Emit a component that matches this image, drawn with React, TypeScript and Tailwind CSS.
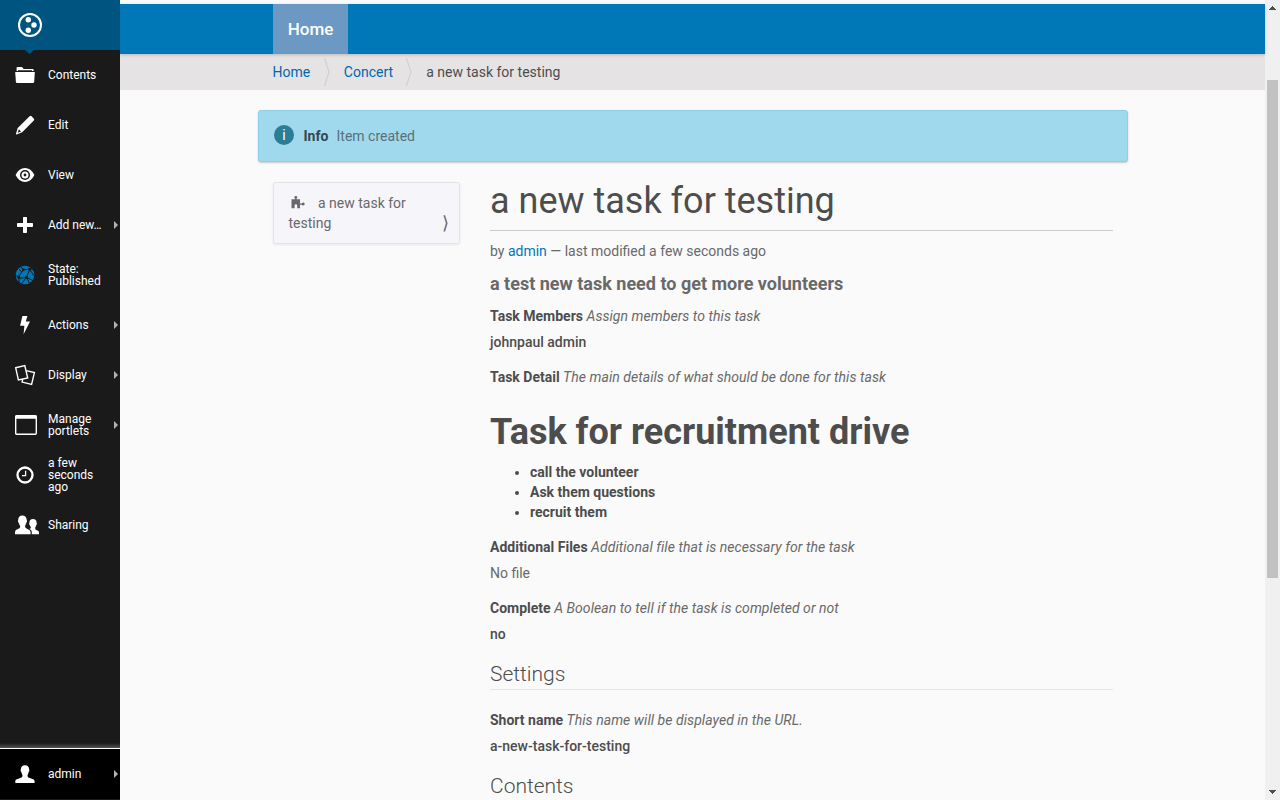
import React from 'react';

const icon = 'block overflow-visible';

function Logo() {
  return (
    <svg className={icon} width="24" height="24" viewBox="0 0 24 24" fill="#fff">
      <circle cx="12" cy="12" r="11" fill="none" stroke="#fff" strokeWidth="2" />
      <circle cx="10.3" cy="6.7" r="2.7" />
      <circle cx="16" cy="12" r="2.7" />
      <circle cx="10.3" cy="17.3" r="2.7" />
    </svg>
  );
}

function FolderIcon() {
  return (
    <svg className={icon} width="20" height="20" viewBox="0 0 20 20" fill="#fff">
      <path d="M1.6 6V2.8Q1.6 2 2.4 2H6.6Q7.4 2 8 3.2Q8.3 4 9.2 4H17.8Q18.6 4 18.6 5V6H17V5.2H3V6Z" />
      <path d="M0.2 7H19.8L19.2 17Q19.1 18 18 18H2Q1 18 .9 17Z" />
    </svg>
  );
}

function PencilIcon() {
  return (
    <svg className={icon} width="20" height="20" viewBox="0 0 20 20" fill="#fff">
      <path fillRule="evenodd" d="M14.6 1.2Q15.6.4 16.6 1.3L18.7 3.4Q19.8 4.5 18.8 5.5L7.2 17.2L1.6 19.4Q.8 19.6 1 18.7L2.7 12.9ZM3.9 14.3L2.7 17.7L6 16.4Z" />
    </svg>
  );
}

function EyeIcon() {
  return (
    <svg className={icon} width="20" height="20" viewBox="0 0 20 20">
      <path fill="#fff" d="M.6 10Q4 3 10 3T19.4 10Q16 17 10 17T.6 10Z" />
      <circle cx="10" cy="10" r="5" fill="#1a1a1a" />
      <circle cx="10" cy="10" r="3.5" fill="#fff" />
      <circle cx="10" cy="10" r="1.4" fill="#1a1a1a" />
    </svg>
  );
}

function PlusIcon() {
  return (
    <svg className={icon} width="20" height="20" viewBox="0 0 20 20" fill="#fff">
      <path d="M8.8 2H11.2Q12 2 12 2.8V8H17.2Q18 8 18 8.8V11.2Q18 12 17.2 12H12V17.2Q12 18 11.2 18H8.8Q8 18 8 17.2V12H2.8Q2 12 2 11.2V8.8Q2 8 2.8 8H8V2.8Q8 2 8.8 2Z" />
    </svg>
  );
}

function StateIcon() {
  return (
    <svg className={icon} width="20" height="20" viewBox="0 0 20 20">
      <circle cx="10" cy="10" r="9.3" fill="#0077b6" />
      <g fill="none" stroke="#1a1a1a" strokeWidth="1">
        <path d="M5.5 1.5L8.4 4.8L14.6 4.2L17.5 3" />
        <path d="M8.4 4.8L3.5 11.5L0 10.5" />
        <path d="M4.2 4.1L6.6 7" />
        <path d="M3.5 11.5L4.3 17.5" />
        <path d="M3.8 13.5L11.5 12.4L14.8 4.2" />
        <path d="M14.6 4.2L19.4 11.4" />
        <path d="M11.5 12.4L18.5 15.8" />
        <path d="M11.5 12.4L6.3 19" />
        <path d="M11.7 12.7L14.6 18.7" />
      </g>
      <g fill="#1a1a1a">
        <circle cx="8.5" cy="4.8" r="1.3" />
        <circle cx="14.7" cy="4.3" r="1.5" />
        <circle cx="3.7" cy="12" r="1.6" />
        <circle cx="11.6" cy="12.5" r="1.4" />
      </g>
    </svg>
  );
}

function BoltIcon() {
  return (
    <svg className={icon} width="20" height="20" viewBox="0 0 20 20" fill="#fff">
      <path d="M7.4 1H12.4L10.8 6.6H15L8.6 19.3L9.4 10.8H5.1Z" />
    </svg>
  );
}

function DisplayIcon() {
  return (
    <svg className={icon} width="20" height="20" viewBox="0 0 20 20" fill="none" stroke="#fff" strokeWidth="1.4">
      <path d="M.7 2.8L9.8.6L12.7 13L3.4 15Z" />
      <path d="M11.3 5.6L19.4 7.6L16.6 19.4L7.1 17.1L7.7 14.2" />
    </svg>
  );
}

function WindowIcon() {
  return (
    <svg className={icon} width="22" height="20" viewBox="0 0 22 20">
      <rect x=".7" y=".7" width="20.6" height="18.6" rx="1" fill="none" stroke="#fff" strokeWidth="1.4" />
      <rect x=".5" y=".2" width="21" height="3.6" rx=".8" fill="#fff" />
    </svg>
  );
}

function ClockIcon() {
  return (
    <svg className={icon} width="20" height="20" viewBox="0 0 20 20" fill="none" stroke="#fff">
      <circle cx="10" cy="10" r="7.5" strokeWidth="2.3" />
      <path d="M10.6 5.8V10.7H7" strokeWidth="1.3" />
    </svg>
  );
}

function PeopleIcon() {
  return (
    <svg className={icon} width="24" height="20" viewBox="0 0 24 20" fill="#fff">
      <path d="M7.4.6C10 .6 11.8 2.4 11.7 5.3C12.3 5.6 12.2 7 11.4 7.6C11.2 9.3 10.2 10 10.1 11.3C10.1 12.7 11 13.4 12.8 14.2C14.6 15 15.6 15.8 15.6 17.4V19.3H0V17.3C0 15.6 1.2 14.8 3 14.1C4.4 13.4 5.3 12.7 5.2 11.2C4.6 9.8 4 9.2 3.6 7.6C2.8 7 2.7 5.8 3.2 5.3C3.1 2.4 4.8 .6 7.4 .6Z" />
      <path d="M18 4C20.3 4 21.8 5.6 21.6 8C22.1 8.3 22 9.6 21.3 9.9C21 11.4 20.2 11.8 20.2 13C20.2 14.2 20.8 14.8 22 15.3C23.4 15.9 24 16.6 24 17.6V19.3H16.8V17.2C16.8 15.5 15.8 14.6 14.5 13.9C15.6 13.6 16 13 15.8 12C15.2 11.2 14.9 10.8 14.7 9.9C14 9.6 13.9 8.3 14.4 8C14.2 5.6 15.7 4 18 4Z" />
    </svg>
  );
}

function UserIcon() {
  return (
    <svg className={icon} width="20" height="20" viewBox="0 0 20 20" fill="#fff">
      <path d="M10 1.2C12.8 1.2 14.3 2.8 14.1 5.6C14.7 5.9 14.5 7.4 13.8 7.8C13.4 9.8 12.6 10.4 12.5 11.8C12.5 13 13.2 13.6 15.4 14.3C18.4 15.2 19.6 15.9 19.6 17.4V19.1H.3V17.4C.3 15.9 1.6 15.2 4.6 14.3C6.8 13.6 7.5 13 7.5 11.8C7.4 10.4 6.6 9.8 6.2 7.8C5.5 7.4 5.3 5.9 5.9 5.6C5.7 2.8 7.2 1.2 10 1.2Z" />
    </svg>
  );
}

function PuzzleIcon() {
  return (
    <svg className="block" width="14" height="13" viewBox="0 0 14 13" fill="#696969">
      <path d="M.5 3.2H4V2.6Q3.1 2 3.3 1.1Q3.7 0 4.8 0T6.3 1.1Q6.5 2 5.6 2.6V3.2H9V7.4H10.8Q11.2 6.4 12.4 6.5Q13.7 6.8 13.7 8T12.4 9.5Q11.2 9.6 10.8 8.7H9V12.2H6.2V9.4Q6.2 8.2 4.9 8.2T3.6 9.4V12.2H.5Z" />
    </svg>
  );
}

function Arrow() {
  return (
    <svg className="block" width="4" height="8" viewBox="0 0 4 8">
      <path d="M0 0L4 4L0 8Z" fill="#b3b3b3" />
    </svg>
  );
}

type Item = { label: string; icon: React.ReactNode; arrow?: boolean };

const items: Item[] = [
  { label: 'Contents', icon: <FolderIcon /> },
  { label: 'Edit', icon: <PencilIcon /> },
  { label: 'View', icon: <EyeIcon /> },
  { label: 'Add new…', icon: <PlusIcon />, arrow: true },
  { label: 'State: Published', icon: <StateIcon /> },
  { label: 'Actions', icon: <BoltIcon />, arrow: true },
  { label: 'Display', icon: <DisplayIcon />, arrow: true },
  { label: 'Manage portlets', icon: <WindowIcon />, arrow: true },
  { label: 'a few seconds ago', icon: <ClockIcon /> },
  { label: 'Sharing', icon: <PeopleIcon /> },
];

function ToolbarItem({ item }: { item: Item }) {
  return (
    <li className="flex h-[50px] items-center pl-[15px] pr-0.5">
      <span className="w-[33px] shrink-0">{item.icon}</span>
      <span className="w-[58px] shrink-0 text-xs leading-3 text-white">{item.label}</span>
      {item.arrow && (
        <span className="ml-auto">
          <Arrow />
        </span>
      )}
    </li>
  );
}

function Toolbar() {
  return (
    <aside className="flex w-[120px] shrink-0 flex-col bg-[#1a1a1a]">
      <div className="relative h-[50px] bg-[#005580] pl-[18px] pt-[13px]">
        <Logo />
        <svg className="absolute left-[25px] top-[50px]" width="9" height="4" viewBox="0 0 9 4">
          <path d="M0 0H9L4.5 4Z" fill="#005580" />
        </svg>
      </div>
      <ul>
        {items.map((item) => (
          <ToolbarItem key={item.label} item={item} />
        ))}
      </ul>
      <div className="mt-auto h-[5px] bg-linear-to-b from-[#1a1a1a] to-[#555]" />
      <ul className="h-[52px] border-b border-t border-b-[#1a1a1a] border-t-white bg-black">
        <ToolbarItem item={{ label: 'admin', icon: <UserIcon />, arrow: true }} />
      </ul>
    </aside>
  );
}

function Separator() {
  return (
    <svg className="block" width="6" height="28" viewBox="0 0 6 28" fill="none">
      <path d="M.5 0L5 14L.5 28" stroke="#ccc" />
    </svg>
  );
}

function Help({ children }: { children: string }) {
  return <i className="tracking-[0.05px]">{children}</i>;
}

function Field({ label, help }: { label: string; help: string }) {
  return (
    <p className="mt-[15px] h-5">
      <b className="font-bold text-[#4d4d4d]">{label}</b> <Help>{help}</Help>
    </p>
  );
}

function Scrollbar() {
  return (
    <div className="flex w-[15px] shrink-0 flex-col items-center bg-[#f0f0f0]">
      <svg className="mt-1.5 block shrink-0" width="7" height="4" viewBox="0 0 7 4" shapeRendering="crispEdges">
        <path d="M3 0h1v1h1v1h1v1h1v1H0V3h1V2h1V1h1Z" fill="#505050" />
      </svg>
      <div className="mt-[70px] h-[498px] w-[11px] shrink-0 bg-[#c1c1c1]" />
      <svg className="mb-1.5 mt-auto block shrink-0" width="7" height="4" viewBox="0 0 7 4" shapeRendering="crispEdges">
        <path d="M0 0h7v1H6v1H5v1H4v1H3V3H2V2H1V1H0Z" fill="#505050" />
      </svg>
    </div>
  );
}

export default function App() {
  return (
    <div className="flex h-[800px] w-[1280px] overflow-hidden bg-[#fafafa] font-['Roboto',sans-serif] text-sm leading-5 text-[#696969]">
      <Toolbar />
      <div className="min-w-0 flex-1">
        <nav className="relative mt-1 flex h-[50px] bg-[#0077b6] pl-[153px] shadow-[0_1px_3px_rgba(0,0,0,0.2)]">
          <a className="flex w-[75px] items-center justify-center bg-[#6c98c4] pb-px text-[17px] font-medium text-white">
            Home
          </a>
        </nav>
        <div className="flex h-9 items-center bg-[#e5e3e4] pl-[152.5px]">
          <a className="w-[51.5px] text-[#0067ac]">Home</a>
          <Separator />
          <a className="ml-[13.8px] w-[62.2px] text-[#0067ac]">Concert</a>
          <Separator />
          <span className="ml-[14.3px] text-[#4d4d4d]">a new task for testing</span>
        </div>
        <div className="ml-[138px] mt-5 flex h-[52px] w-[870px] items-center rounded-[3px] border border-[#8ed0e8] bg-[#a0d9ed] pl-[15px] text-[#59707a] shadow-[0_1px_2px_rgba(0,0,0,0.2)]">
          <span className="mb-0.5 flex size-5 items-center justify-center rounded-full bg-[#297d94] pb-px text-white">i</span>
          <b className="ml-[9.5px] font-bold text-[#33474f]">Info</b>
          <span className="ml-[8.2px]">Item created</span>
        </div>
        <div className="ml-[153px] mt-5 flex gap-[30px]">
          <div className="flex h-[62px] w-[187px] shrink-0 rounded-[3px] border border-[#e5e3e9] bg-[#f6f5fa] pl-[14.5px] pr-[10px] pt-2.5 shadow-[0_1px_3px_rgba(0,0,0,0.08)]">
            <p className="w-[125px]">
              <span className="inline-block h-3.5 w-[29.5px] pl-[2.5px] align-[-2px]">
                <PuzzleIcon />
              </span>
              a new task for testing
            </p>
            <span className="ml-auto mt-5 text-lg leading-5">⟩</span>
          </div>
          <main className="w-[623px]">
            <h1 className="h-[49px] border-b border-[#ccc] text-4xl leading-[38px] text-[#4d4d4d]">a new task for testing</h1>
            <p className="mt-2.5 h-5">
              by <a className="text-[#0077b6]">admin</a> — last modified a few seconds ago
            </p>
            <p className="mt-[10px] h-[25px] text-lg leading-[25px] font-bold">a test new task need to get more volunteers</p>
            <p className="mt-2.5 h-5">
              <b className="text-[#4d4d4d]">Task Members</b> <Help>Assign members to this task</Help>
            </p>
            <p className="mt-1.5 h-5 font-medium text-[#4d4d4d]">johnpaul admin</p>
            <Field label="Task Detail" help="The main details of what should be done for this task" />
            <h1 className="mt-[25px] h-10 text-4xl leading-10 font-bold text-[#4d4d4d]">Task for recruitment drive</h1>
            <ul className="mt-2.5 list-disc pl-10 font-bold text-[#4d4d4d]">
              <li>call the volunteer</li>
              <li>Ask them questions</li>
              <li>recruit them</li>
            </ul>
            <Field label="Additional Files" help="Additional file that is necessary for the task" />
            <p className="mt-1.5 h-5">No file</p>
            <Field label="Complete" help="A Boolean to tell if the task is completed or not" />
            <p className="mt-1.5 h-5 font-medium text-[#4d4d4d]">no</p>
            <h2 className="mt-5 h-[26px] border-b border-[#e5e5e5] text-[21px] leading-5 font-light text-[#4d4d4d]">Settings</h2>
            <div className="h-[5px]" />
            <Field label="Short name" help="This name will be displayed in the URL." />
            <p className="mt-1.5 h-5 font-medium text-[#4d4d4d]">a-new-task-for-testing</p>
            <h2 className="mt-5 h-[26px] text-[21px] leading-5 font-light text-[#4d4d4d]">Contents</h2>
          </main>
        </div>
      </div>
      <Scrollbar />
    </div>
  );
}
